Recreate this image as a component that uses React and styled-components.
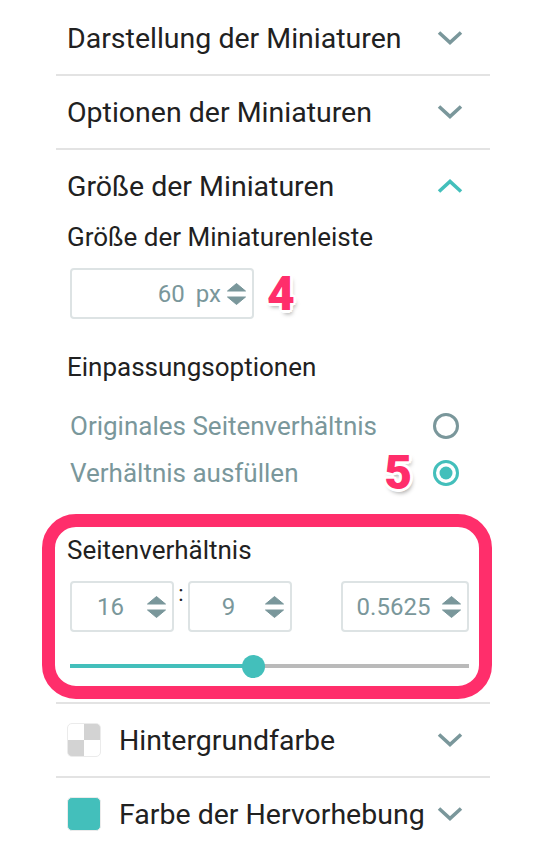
import React, { useState } from 'react';
import styled, { createGlobalStyle } from 'styled-components';

const GlobalStyle = createGlobalStyle`
  html, body {
    margin: 0;
    padding: 0;
    background: #fff;
  }
  body {
    font-family: Roboto, "Liberation Sans", Arial, sans-serif;
    color: #212121;
  }
`;

const TEAL = '#43bfbb';
const SLATE = '#7a979b';
const PINK = '#ff2e6b';

const Panel = styled.div`
  width: 434px;
  margin-left: 56px;
  padding-top: 2px;
`;

const Section = styled.div`
  border-bottom: ${(p) => (p.$last ? 'none' : '2px solid #e3e3e3')};
`;

const Header = styled.div`
  display: flex;
  align-items: center;
  height: 72px;
  padding: 0 27px 0 11px;
  cursor: pointer;
`;

const Title = styled.div`
  flex: 1;
  font-size: 28.5px;
  white-space: nowrap;
`;

const Swatch = styled.div`
  width: 32px;
  height: 32px;
  margin-right: 18px;
  border: 1px solid #ebebeb;
  border-radius: 5px;
  background: ${(p) =>
    p.$checker
      ? `conic-gradient(#d3d3d3 0 25%, #fff 0 50%, #d3d3d3 0 75%, #fff 0)`
      : p.$color};
`;

const Body = styled.div`
  padding-left: 11px;
`;

const Label = styled.div`
  font-size: 26px;
  line-height: 30px;
  margin-top: ${(p) => p.$top || 0}px;
`;

const FieldRow = styled.div`
  display: flex;
  align-items: center;
  margin-top: 16px;
  padding-left: 3px;
`;

const NumberBox = styled.div`
  display: flex;
  align-items: center;
  box-sizing: border-box;
  width: ${(p) => p.$width}px;
  height: 51px;
  border: 2px solid #dde3e4;
  border-radius: 4px;
  padding: 0 6px 0 2px;
  color: ${SLATE};
  font-size: 24px;
`;

const BoxValue = styled.span`
  flex: 1;
  text-align: ${(p) => p.$align || 'center'};
`;

const Unit = styled.span`
  margin: 0 6px 0 11px;
`;

const Badge = styled.span`
  font-family: Roboto, "Liberation Sans", Arial, sans-serif;
  font-weight: 900;
  font-size: 48px;
  line-height: 44px;
  color: ${PINK};
  text-shadow:
    -2px -2px 0 #fff, 2px -2px 0 #fff, -2px 2px 0 #fff, 2px 2px 0 #fff,
    0 -3px 0 #fff, 0 3px 0 #fff, -3px 0 0 #fff, 3px 0 0 #fff,
    2px 4px 4px rgba(0, 0, 0, 0.35);
  margin-left: ${(p) => p.$left || 0}px;
  margin-right: ${(p) => p.$right || 0}px;
`;

const RadioGroup = styled.div`
  margin-top: 20px;
`;

const RadioRow = styled.label`
  display: flex;
  align-items: center;
  height: 47px;
  padding-left: 3px;
  padding-right: 30px;
  color: ${SLATE};
  font-size: 26px;
  cursor: pointer;
`;

const RadioText = styled.span`
  flex: 1;
`;

const Highlight = styled.div`
  margin: 18px -2px 3px -25px;
  border: 13px solid ${PINK};
  border-radius: 34px;
  padding: 8px 10px 13px 12px;
`;

const RatioRow = styled.div`
  display: flex;
  align-items: flex-start;
  margin-top: 16px;
  padding-left: 3px;
`;

const Colon = styled.span`
  width: 14px;
  text-align: center;
  font-size: 22px;
  line-height: 22px;
  margin-top: 2px;
`;

const Spacer = styled.div`
  flex: 1;
`;

const SliderTrack = styled.div`
  position: relative;
  height: 4px;
  margin: 32px 0 5px 3px;
  background: #bababa;
`;

const SliderFill = styled.div`
  height: 100%;
  background: ${TEAL};
`;

const Thumb = styled.div`
  position: absolute;
  top: 50%;
  width: 23px;
  height: 23px;
  margin: -11.5px 0 0 -11.5px;
  border-radius: 50%;
  background: ${TEAL};
`;

const Chevron = ({ up }) => (
  <svg width="26" height="14" viewBox="0 0 26 14">
    <path
      d={up ? 'M2 12.5 L13 2.5 L24 12.5' : 'M2 1.5 L13 11.5 L24 1.5'}
      fill="none"
      stroke={up ? TEAL : SLATE}
      strokeWidth="3.6"
    />
  </svg>
);

const Spinner = () => (
  <svg width="19" height="22" viewBox="0 0 19 22">
    <path d="M9.5 0.5 L18.5 8 L0.5 8 Z" fill={SLATE} strokeLinejoin="round" stroke={SLATE} strokeWidth="1" />
    <path d="M9.5 21.5 L18.5 14 L0.5 14 Z" fill={SLATE} strokeLinejoin="round" stroke={SLATE} strokeWidth="1" />
  </svg>
);

const Radio = ({ checked }) => (
  <svg width="28" height="28" viewBox="0 0 28 28">
    <circle cx="14" cy="14" r="11.5" fill="none" stroke={checked ? TEAL : SLATE} strokeWidth="3" />
    {checked && <circle cx="14" cy="14" r="6.5" fill={TEAL} />}
  </svg>
);

const App = () => {
  const [fit, setFit] = useState('fill');
  const ratio = 0.5625;
  const pos = `${ratio * 81.6}%`;

  return (
    <>
      <GlobalStyle />
      <Panel>
        <Section>
          <Header>
            <Title>Darstellung der Miniaturen</Title>
            <Chevron />
          </Header>
        </Section>
        <Section>
          <Header>
            <Title>Optionen der Miniaturen</Title>
            <Chevron />
          </Header>
        </Section>
        <Section>
          <Header>
            <Title>Größe der Miniaturen</Title>
            <Chevron up />
          </Header>
          <Body>
            <Label>Größe der Miniaturenleiste</Label>
            <FieldRow>
              <NumberBox $width={184}>
                <BoxValue $align="right">60</BoxValue>
                <Unit>px</Unit>
                <Spinner />
              </NumberBox>
              <Badge $left={13}>4</Badge>
            </FieldRow>
            <Label $top={33}>Einpassungsoptionen</Label>
            <RadioGroup>
              <RadioRow onClick={() => setFit('original')}>
                <RadioText>Originales Seitenverhältnis</RadioText>
                <Radio checked={fit === 'original'} />
              </RadioRow>
              <RadioRow onClick={() => setFit('fill')}>
                <RadioText>Verhältnis ausfüllen</RadioText>
                <Badge $right={20}>5</Badge>
                <Radio checked={fit === 'fill'} />
              </RadioRow>
            </RadioGroup>
            <Highlight>
              <Label>Seitenverhältnis</Label>
              <RatioRow>
                <NumberBox $width={104}>
                  <BoxValue>16</BoxValue>
                  <Spinner />
                </NumberBox>
                <Colon>:</Colon>
                <NumberBox $width={104}>
                  <BoxValue>9</BoxValue>
                  <Spinner />
                </NumberBox>
                <Spacer />
                <NumberBox $width={128}>
                  <BoxValue>{ratio}</BoxValue>
                  <Spinner />
                </NumberBox>
              </RatioRow>
              <SliderTrack>
                <SliderFill style={{ width: pos }} />
                <Thumb style={{ left: pos }} />
              </SliderTrack>
            </Highlight>
          </Body>
        </Section>
        <Section>
          <Header>
            <Swatch $checker />
            <Title>Hintergrundfarbe</Title>
            <Chevron />
          </Header>
        </Section>
        <Section $last>
          <Header>
            <Swatch $color={TEAL} />
            <Title>Farbe der Hervorhebung</Title>
            <Chevron />
          </Header>
        </Section>
      </Panel>
    </>
  );
};

export default App;
